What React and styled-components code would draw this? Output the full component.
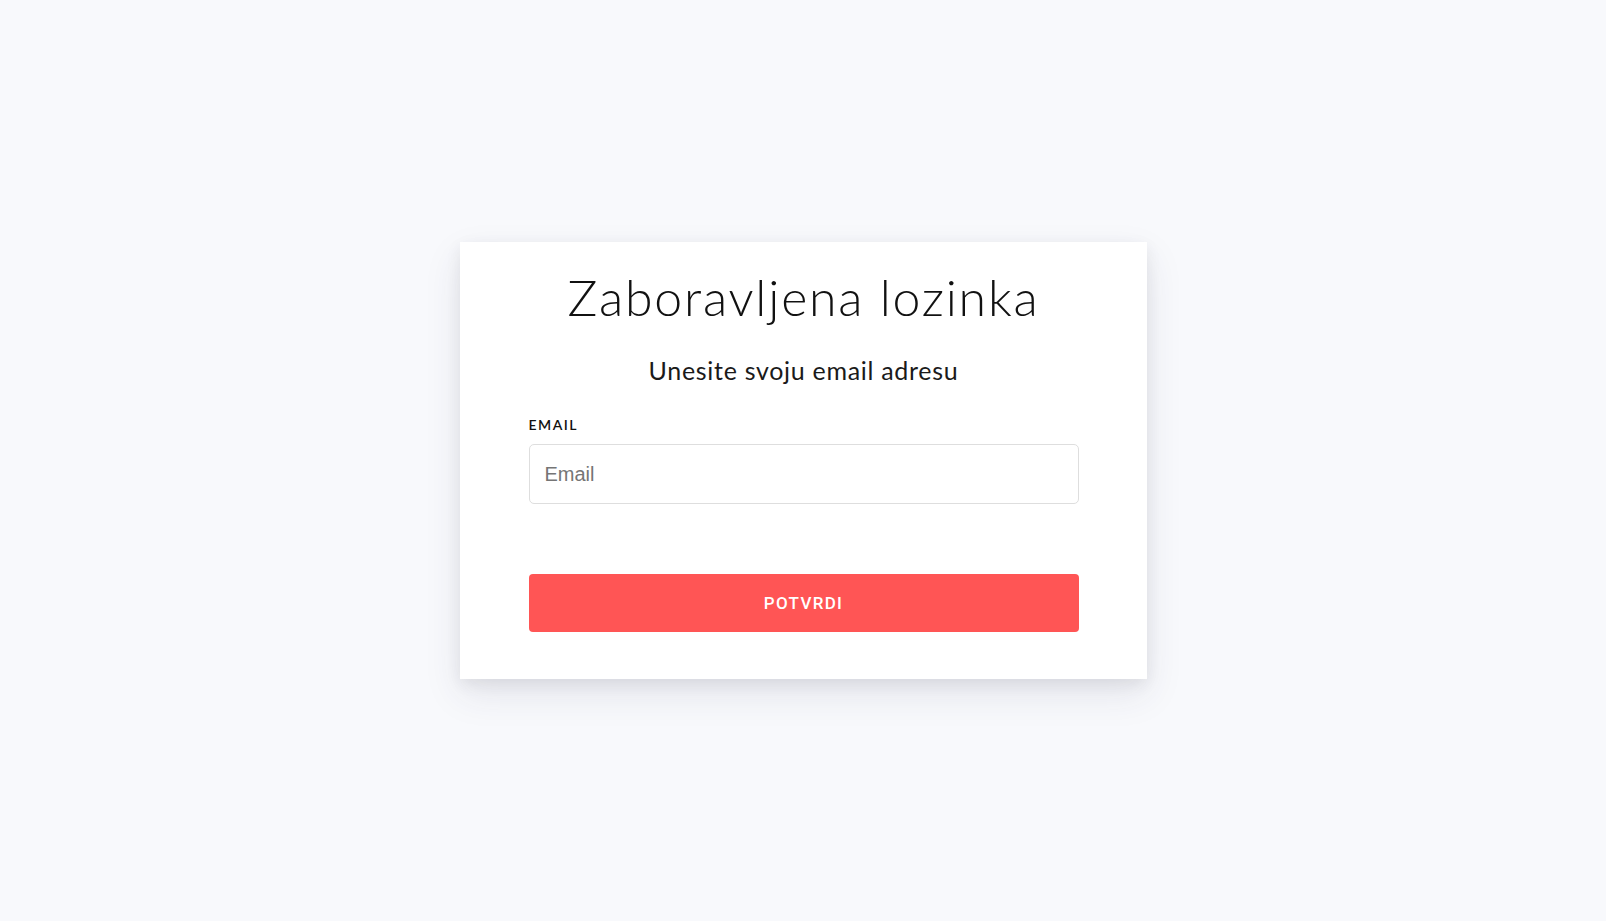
import React from "react";
import styled, { createGlobalStyle } from "styled-components";

const GlobalStyle = createGlobalStyle`
  * { box-sizing: border-box; }
  html, body { margin: 0; padding: 0; }
  body {
    background: #f8f9fc;
    font-family: Lato, "Liberation Sans", sans-serif;
    color: #111;
  }
`;

const Page = styled.div`
  min-height: 100vh;
  display: flex;
  align-items: center;
  justify-content: center;
`;

const Card = styled.form`
  width: 687px;
  background: #ffffff;
  padding: 25px 68px 47px 69px;
  display: flex;
  flex-direction: column;
  box-shadow: 0 15px 35px rgba(50, 50, 93, 0.1), 0 5px 15px rgba(0, 0, 0, 0.07);
`;

const Title = styled.h1`
  margin: 0;
  text-align: center;
  font-family: Lato, sans-serif;
  font-weight: 300;
  font-size: 50px;
  line-height: 60px;
  letter-spacing: 1.8px;
  color: #111;
`;

const Subtitle = styled.p`
  margin: 28px 0 0;
  text-align: center;
  font-family: Lato, sans-serif;
  font-weight: 400;
  font-size: 25px;
  line-height: 30px;
  letter-spacing: 0.7px;
  color: #1a1a1a;
`;

const Field = styled.div`
  margin-top: 31px;
  display: flex;
  flex-direction: column;
  gap: 10px;
`;

const Label = styled.label`
  font-family: Lato, sans-serif;
  font-weight: 600;
  font-size: 14px;
  line-height: 18px;
  letter-spacing: 1.5px;
  color: #111;
  text-transform: uppercase;
`;

const Input = styled.input`
  height: 60px;
  width: 100%;
  border: 1px solid #dedede;
  border-radius: 5px;
  padding: 0 15px;
  font-family: "Liberation Sans", Arial, sans-serif;
  font-size: 20px;
  color: #333;
  background: #fff;
  outline: none;
  &::placeholder { color: #757575; }
`;

const Submit = styled.button`
  margin-top: 70px;
  height: 58px;
  width: 100%;
  border: none;
  border-radius: 4px;
  background: #ff5555;
  color: #fff;
  font-family: Roboto, sans-serif;
  font-weight: 500;
  font-size: 17px;
  letter-spacing: 1.3px;
  text-transform: uppercase;
  cursor: pointer;
`;

export default function App() {
  return (
    <>
      <GlobalStyle />
      <Page>
        <Card onSubmit={(e) => e.preventDefault()}>
          <Title>Zaboravljena lozinka</Title>
          <Subtitle>Unesite svoju email adresu</Subtitle>
          <Field>
            <Label htmlFor="email">Email</Label>
            <Input id="email" type="email" placeholder="Email" />
          </Field>
          <Submit type="submit">Potvrdi</Submit>
        </Card>
      </Page>
    </>
  );
}
